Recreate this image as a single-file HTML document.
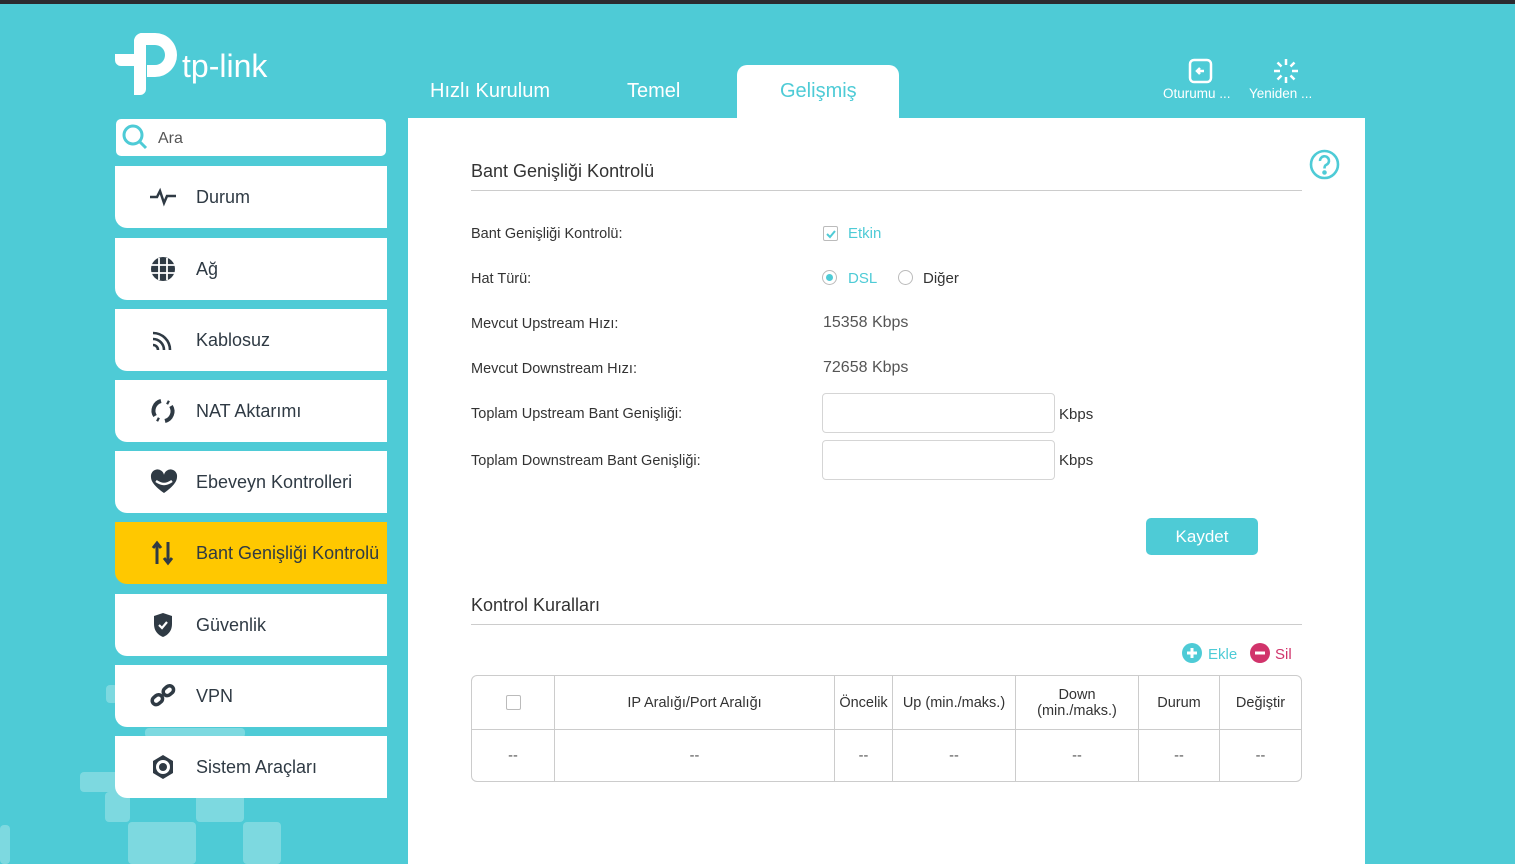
<!DOCTYPE html>
<html><head><meta charset="utf-8"><style>
*{box-sizing:border-box;margin:0;padding:0}
body{width:1515px;height:864px;overflow:hidden;background:#4ecbd6;font-family:"Liberation Sans",sans-serif;position:relative;color:#333}
.a{position:absolute}
.top{left:0;top:0;width:1515px;height:4px;background:#2b2b2f}
.sq{position:absolute;background:#7dd9e0;border-radius:4px}
.mi{position:absolute;left:115px;width:272px;height:62px;background:#fff;border-bottom-left-radius:12px;font-size:18px;color:#2f3a44}
.mi span{position:absolute;left:81px;top:21px}
.mi svg{position:absolute;left:35px;top:18px}
.tab{font-size:20px;color:#fff;top:80px}
.lbl{position:absolute;left:471px;font-size:14.5px;color:#333;top:0}
.val{position:absolute;left:823px;font-size:16px;color:#555}
.inp{position:absolute;left:822px;width:233px;height:40px;border:1px solid #d5d5d5;border-radius:4px;background:#fff}
.kb{position:absolute;left:1059px;font-size:15px;color:#333}
table{position:absolute;left:471px;top:675px;width:831px;border-collapse:separate;border-spacing:0;border:1px solid #ccc;border-radius:6px;font-size:14.5px;color:#333}
td{border-right:1px solid #ccc;text-align:center;vertical-align:middle}
td:last-child{border-right:none}
tr:first-child td{height:54px;border-bottom:1px solid #ccc}
tr:last-child td{height:51px;color:#555}
</style></head><body>
<div class="a top"></div>
<div class="sq" style="left:80px;top:772px;width:40px;height:20px"></div>
<div class="sq" style="left:106px;top:685px;width:12px;height:18px"></div>
<div class="sq" style="left:105px;top:792px;width:25px;height:30px"></div>
<div class="sq" style="left:128px;top:822px;width:68px;height:42px"></div>
<div class="sq" style="left:196px;top:792px;width:48px;height:30px"></div>
<div class="sq" style="left:243px;top:822px;width:38px;height:42px"></div>
<div class="sq" style="left:0;top:825px;width:10px;height:39px"></div>
<div class="sq" style="left:145px;top:728px;width:100px;height:10px"></div>

<svg class="a" style="left:115px;top:33px" width="62" height="62" viewBox="0 0 62 62"><path d="M30 0h10a22 22 0 0 1 0 44h-8v-12h8a10 10 0 0 0 0-20h-9v44a6 6 0 0 1-6 6h-6v-29h-13a6 6 0 0 1-6-6v-6h19v-14a9 9 0 0 1 11-7z" fill="#fff"/></svg>
<div class="a" style="left:182px;top:48px;font-size:32px;color:#fff;letter-spacing:0px">tp-link</div>

<div class="a tab" style="left:430px">Hızlı Kurulum</div>
<div class="a tab" style="left:627px">Temel</div>
<div class="a" style="left:737px;top:65px;width:162px;height:60px;background:#fff;border-radius:10px 10px 0 0"></div>
<div class="a tab" style="left:780px;color:#4ecbd6">Gelişmiş</div>

<svg class="a" style="left:1188px;top:58px" width="25" height="26" viewBox="0 0 25 26" fill="none" stroke="#fff" stroke-width="2.5"><rect x="2" y="2" width="21" height="22" rx="4"/><path d="M16 13h-7M12 10l-3 3 3 3"/></svg>
<div class="a" style="left:1163px;top:86px;font-size:13.5px;color:#fff">Oturumu ...</div>
<svg class="a" style="left:1273px;top:58px" width="26" height="26" viewBox="0 0 26 26" stroke="#fff" stroke-width="2.5"><path d="M13 1v6M13 19v6M1 13h6M19 13h6M4.5 4.5l4 4M17.5 17.5l4 4M21.5 4.5l-4 4M8.5 17.5l-4 4"/></svg>
<div class="a" style="left:1249px;top:86px;font-size:13.5px;color:#fff">Yeniden ...</div>

<div class="a" style="left:116px;top:119px;width:270px;height:37px;background:#fff;border-radius:5px"></div>
<svg class="a" style="left:120px;top:122px" width="30" height="30" viewBox="0 0 30 30" fill="none" stroke="#4ecbd6" stroke-width="3"><circle cx="13" cy="13" r="9"/><path d="M20 20l6 6"/></svg>
<div class="a" style="left:158px;top:130px;font-size:16px;color:#555">Ara</div>

<div class="mi" style="top:166px"><svg width="26" height="26" viewBox="0 0 26 26" fill="none" stroke="#2f3a44" stroke-width="2.5"><path d="M0 13h7l3-6 4 12 3-7h2 7"/></svg><span>Durum</span></div>
<div class="mi" style="top:238px"><svg width="26" height="26" viewBox="0 0 26 26"><circle cx="13" cy="13" r="12" fill="#2f3a44"/><path d="M1 9h24M1 17h24M9 2v22M17 2v22" stroke="#fff" stroke-width="1.8"/></svg><span>Ağ</span></div>
<div class="mi" style="top:309px"><svg width="26" height="26" viewBox="0 0 26 26" fill="none" stroke="#2f3a44" stroke-width="2.6"><path d="M3 6a17 17 0 0 1 17 17M3 12a11 11 0 0 1 11 11M3 18a5 5 0 0 1 5 5"/></svg><span>Kablosuz</span></div>
<div class="mi" style="top:380px"><svg width="26" height="26" viewBox="0 0 26 26" fill="none" stroke="#2f3a44" stroke-width="4"><path d="M11 3a10 10 0 0 0-6 15M15 23a10 10 0 0 0 6-15M17 4l2 1M9 22l-2-1"/></svg><span>NAT Aktarımı</span></div>
<div class="mi" style="top:451px"><svg width="28" height="26" viewBox="0 0 28 26"><path d="M14 24C4 17 1 12 1 8a6 6 0 0 1 13-2 6 6 0 0 1 13 2c0 4-3 9-13 16z" fill="#2f3a44"/><path d="M6 12c3 2 5 3 8 3s5-1 8-3" stroke="#fff" stroke-width="2.5" fill="none"/></svg><span>Ebeveyn Kontrolleri</span></div>
<div class="mi" style="top:522px;background:#ffc800"><svg width="26" height="26" viewBox="0 0 26 26" fill="none" stroke="#2f3a44" stroke-width="3"><path d="M7 24V4M3 8l4-5 4 5M18 2v20M14 18l4 5 4-5"/></svg><span>Bant Genişliği Kontrolü</span></div>
<div class="mi" style="top:594px"><svg width="26" height="26" viewBox="0 0 26 26"><path d="M13 1l9 3v8c0 7-4 11-9 13-5-2-9-6-9-13V4z" fill="#2f3a44"/><path d="M9 13l3 3 5-6" stroke="#fff" stroke-width="2.2" fill="none"/></svg><span>Güvenlik</span></div>
<div class="mi" style="top:665px"><svg width="26" height="26" viewBox="0 0 26 26" fill="none" stroke="#2f3a44" stroke-width="3.5"><rect x="2" y="13" width="11" height="8" rx="4" transform="rotate(-40 7 17)"/><rect x="13" y="4" width="11" height="8" rx="4" transform="rotate(-40 18 8)"/></svg><span>VPN</span></div>
<div class="mi" style="top:736px"><svg width="26" height="26" viewBox="0 0 26 26"><path d="M13 1l10 6v12l-10 6-10-6V7z" fill="#2f3a44"/><circle cx="13" cy="13" r="7" fill="#fff"/><circle cx="13" cy="13" r="4" fill="#2f3a44"/></svg><span>Sistem Araçları</span></div>

<div class="a" style="left:408px;top:118px;width:957px;height:746px;background:#fff"></div>
<div class="a" style="left:471px;top:161px;font-size:18px;color:#333">Bant Genişliği Kontrolü</div>
<div class="a" style="left:471px;top:190px;width:831px;height:1px;background:#ccc"></div>
<svg class="a" style="left:1309px;top:149px" width="31" height="31" viewBox="0 0 31 31" fill="none" stroke="#4ecbd6" stroke-width="2.6"><circle cx="15.5" cy="15.5" r="13.5"/><path d="M11 12a4.5 4.5 0 1 1 6 4c-1.5.7-1.5 2-1.5 3.5"/><circle cx="15.5" cy="23.5" r="1" fill="#4ecbd6"/></svg>

<div class="lbl" style="top:226px">Bant Genişliği Kontrolü:</div>
<div class="a" style="left:823px;top:226px;width:15px;height:15px;border:1.5px solid #bbb;border-radius:2px"></div>
<svg class="a" style="left:825px;top:228px" width="12" height="12"><path d="M2 6l3 3 5-6" stroke="#4ecbd6" stroke-width="2" fill="none"/></svg>
<div class="a" style="left:848px;top:225px;font-size:15px;color:#4ecbd6">Etkin</div>

<div class="lbl" style="top:271px">Hat Türü:</div>
<div class="a" style="left:822px;top:270px;width:15px;height:15px;border:1.5px solid #bbb;border-radius:50%"></div>
<div class="a" style="left:826px;top:274px;width:7px;height:7px;background:#4ecbd6;border-radius:50%"></div>
<div class="a" style="left:848px;top:270px;font-size:15px;color:#4ecbd6">DSL</div>
<div class="a" style="left:898px;top:270px;width:15px;height:15px;border:1.5px solid #bbb;border-radius:50%"></div>
<div class="a" style="left:923px;top:270px;font-size:15px;color:#333">Diğer</div>

<div class="lbl" style="top:316px">Mevcut Upstream Hızı:</div><div class="val" style="top:314px">15358 Kbps</div>
<div class="lbl" style="top:361px">Mevcut Downstream Hızı:</div><div class="val" style="top:359px">72658 Kbps</div>
<div class="lbl" style="top:406px">Toplam Upstream Bant Genişliği:</div><div class="inp" style="top:393px"></div><div class="kb" style="top:406px">Kbps</div>
<div class="lbl" style="top:453px">Toplam Downstream Bant Genişliği:</div><div class="inp" style="top:440px"></div><div class="kb" style="top:452px">Kbps</div>

<div class="a" style="left:1146px;top:518px;width:112px;height:37px;background:#4ecbd6;border-radius:5px;color:#fff;font-size:17px;text-align:center;line-height:37px">Kaydet</div>

<div class="a" style="left:471px;top:595px;font-size:18px;color:#333">Kontrol Kuralları</div>
<div class="a" style="left:471px;top:624px;width:831px;height:1px;background:#ccc"></div>
<svg class="a" style="left:1182px;top:643px" width="20" height="20"><circle cx="10" cy="10" r="10" fill="#4ecbd6"/><path d="M10 5v10M5 10h10" stroke="#fff" stroke-width="3"/></svg>
<div class="a" style="left:1208px;top:646px;font-size:15px;color:#4ecbd6">Ekle</div>
<svg class="a" style="left:1250px;top:643px" width="20" height="20"><circle cx="10" cy="10" r="10" fill="#d1336b"/><path d="M5 10h10" stroke="#fff" stroke-width="3"/></svg>
<div class="a" style="left:1275px;top:646px;font-size:15px;color:#d1336b">Sil</div>

<table>
<tr><td style="width:83px"><div style="display:inline-block;width:15px;height:15px;border:1.5px solid #bbb;border-radius:2px;vertical-align:middle"></div></td><td style="width:280px">IP Aralığı/Port Aralığı</td><td style="width:58px">Öncelik</td><td style="width:123px">Up (min./maks.)</td><td style="width:123px">Down<br>(min./maks.)</td><td style="width:81px">Durum</td><td>Değiştir</td></tr>
<tr><td>--</td><td>--</td><td>--</td><td>--</td><td>--</td><td>--</td><td>--</td></tr>
</table>
</body></html>
